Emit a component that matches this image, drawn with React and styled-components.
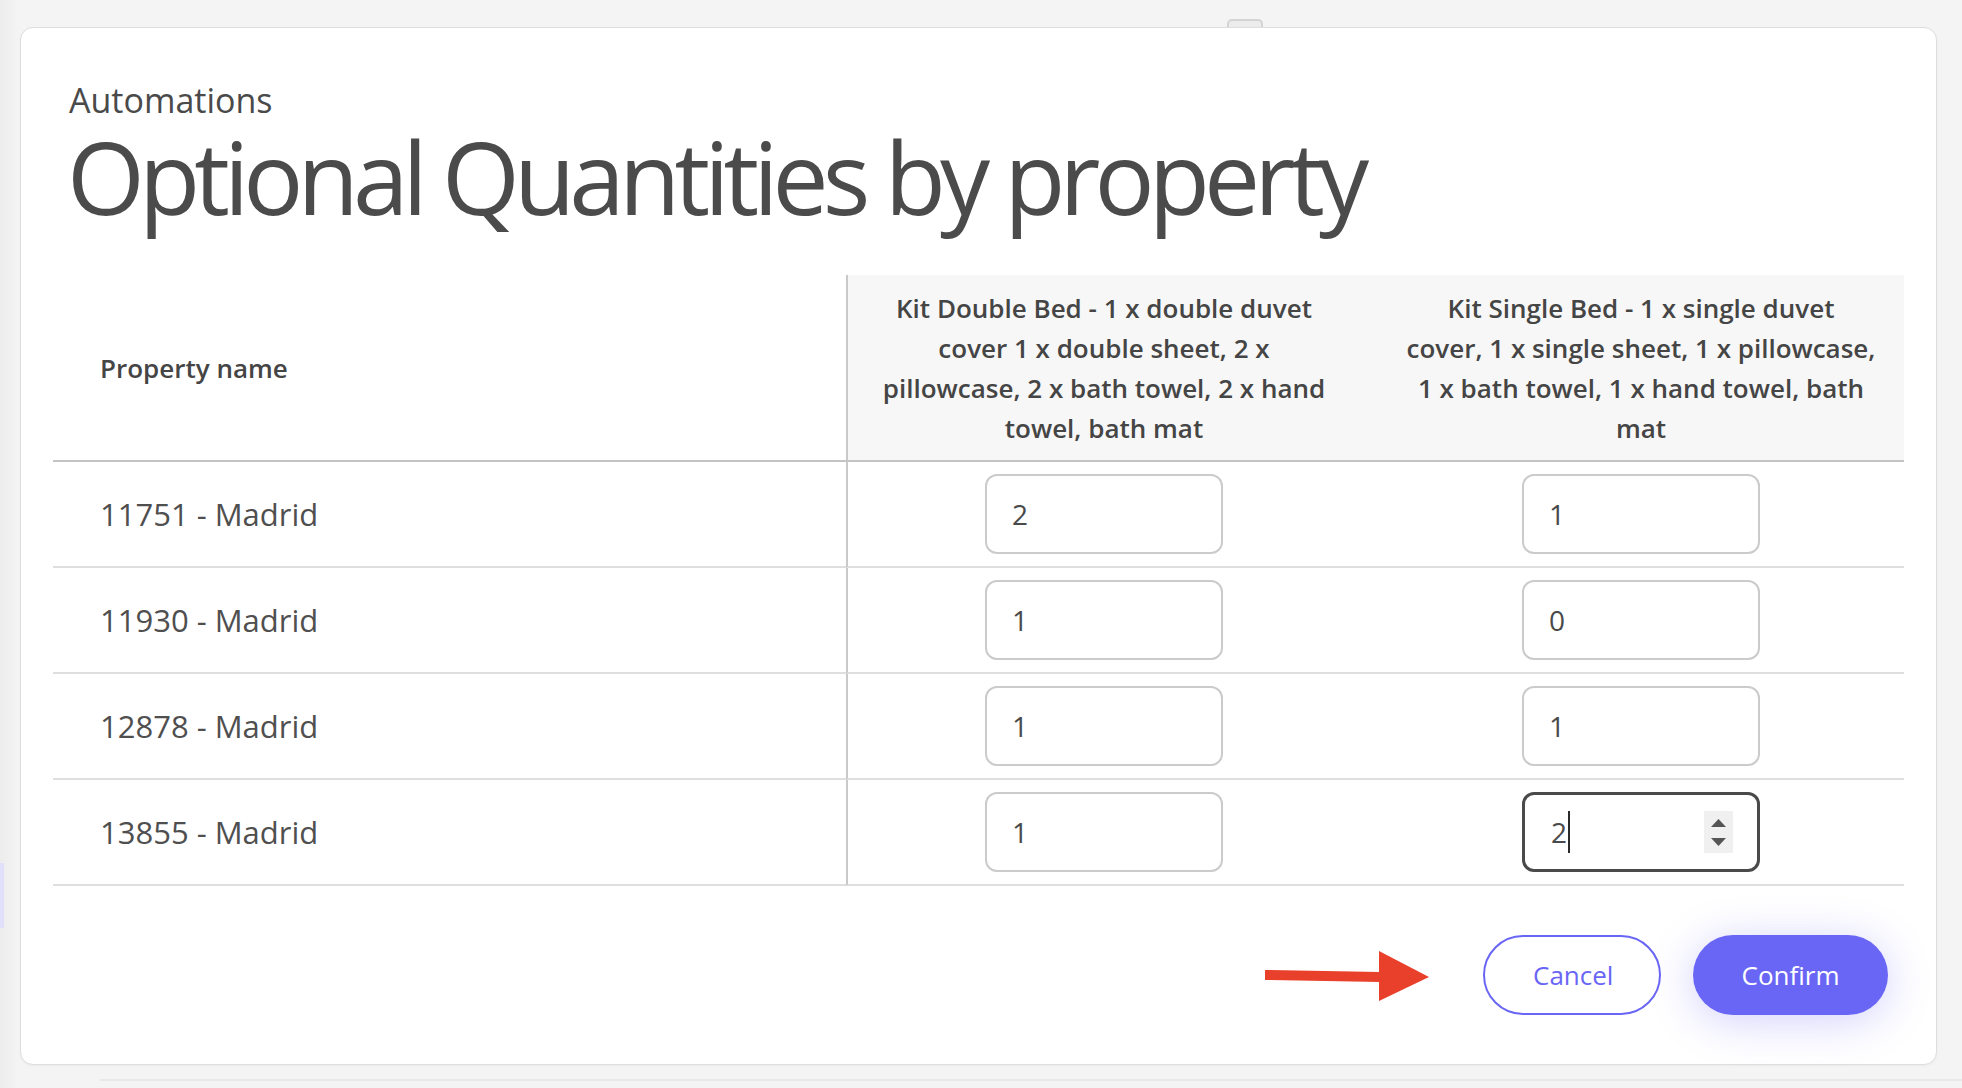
import styled, { createGlobalStyle } from "styled-components";

const GlobalStyle = createGlobalStyle`
    body{
        margin: 0;
        font-family: "Open Sans", "Noto Sans", sans-serif;
        color: #4a4a4a;
        background:
            linear-gradient(#e8e8e8, #e8e8e8) 100px 1079px / 1862px 2px no-repeat,
            linear-gradient(#e2dffb, #e2dffb) 0 863px / 4px 65px no-repeat,
            linear-gradient(90deg, #ececec, #f4f4f4 18px) 0 0 / 20px 100% no-repeat,
            #f4f4f4;
    }
`;

const rows = [
    { name: "11751 - Madrid", double: "2", single: "1" },
    { name: "11930 - Madrid", double: "1", single: "0" },
    { name: "12878 - Madrid", double: "1", single: "1" },
    { name: "13855 - Madrid", double: "1", single: "2", active: true },
];

const QuantityField = ({ value, active }) => {
    if (!active) {
        return (
            <Field>
                <FieldInput type="text" defaultValue={value} readOnly />
            </Field>
        );
    }
    return (
        <Field $active>
            <FieldValue>
                {value}
                <Caret />
            </FieldValue>
            <Spinner>
                <svg width="15" height="8" viewBox="0 0 15 8"><path d="M7.5 0L15 8H0z" fill="#555" /></svg>
                <svg width="15" height="8" viewBox="0 0 15 8"><path d="M0 0h15L7.5 8z" fill="#555" /></svg>
            </Spinner>
        </Field>
    );
};

const App = () => {
    return (
        <Page>
            <GlobalStyle />
            <TopStrip>
                <Tab />
            </TopStrip>
            <Card>
                <Heading>
                    <Eyebrow>Automations</Eyebrow>
                    <Title>Optional Quantities by property</Title>
                </Heading>

                <Table>
                    <HeadCell>Property name</HeadCell>
                    <HeadCell $kit $divider>
                        Kit Double Bed - 1 x double duvet<br />
                        cover 1 x double sheet, 2 x<br />
                        pillowcase, 2 x bath towel, 2 x hand<br />
                        towel, bath mat
                    </HeadCell>
                    <HeadCell $kit $shift>
                        Kit Single Bed - 1 x single duvet<br />
                        cover, 1 x single sheet, 1 x pillowcase,<br />
                        1 x bath towel, 1 x hand towel, bath<br />
                        mat
                    </HeadCell>

                    {rows.map((r) => (
                        <Row key={r.name}>
                            <NameCell>{r.name}</NameCell>
                            <InputCell $divider>
                                <QuantityField value={r.double} />
                            </InputCell>
                            <InputCell $shift>
                                <QuantityField value={r.single} active={r.active} />
                            </InputCell>
                        </Row>
                    ))}
                </Table>

                <Actions>
                    <Pointer width="164" height="50" viewBox="0 0 164 50">
                        <path d="M0 19L115 21V31L0 29z" fill="#e8402a" />
                        <path d="M114 0L164 26L114 50z" fill="#e8402a" />
                    </Pointer>
                    <GhostButton>Cancel</GhostButton>
                    <PrimaryButton>Confirm</PrimaryButton>
                </Actions>
            </Card>
        </Page>
    );
};

const Page = styled.div`
    width: 1962px;
    height: 1088px;
    box-sizing: border-box;
    padding: 0 25px 0 20px;
    overflow: hidden;
`;

const TopStrip = styled.div`
    height: 27px;
    display: flex;
    align-items: flex-end;
    padding-left: 1207px;
`;

const Tab = styled.div`
    width: 32px;
    height: 6px;
    border: 2px solid #d4d4d4;
    border-bottom: none;
    border-radius: 5px 5px 0 0;
    background: #ececec;
`;

const Card = styled.div`
    width: 1917px;
    box-sizing: border-box;
    background: #fff;
    border: 1.5px solid #dedede;
    border-radius: 13px;
    box-shadow: 0 1px 3px rgba(0, 0, 0, 0.04);
    padding: 52px 32px 49px;
`;

const Heading = styled.div`
    padding-left: 16px;
`;

const Eyebrow = styled.div`
    font-size: 34px;
    line-height: 40px;
    color: #4a4a4a;
`;

const Title = styled.h1`
    margin: 4px 0 0 -2px;
    font-size: 100px;
    line-height: 104px;
    font-weight: 500;
    letter-spacing: -5.9px;
    color: #4b4b4b;
`;

const Table = styled.div`
    margin-top: 47px;
    display: grid;
    grid-template-columns: 793px 514px 1fr;
`;

const Row = styled.div`
    display: contents;
`;

const HeadCell = styled.div`
    height: 185px;
    display: flex;
    align-items: center;
    justify-content: ${(p) => (p.$kit ? "center" : "flex-start")};
    text-align: ${(p) => (p.$kit ? "center" : "left")};
    padding-left: ${(p) => (p.$kit ? (p.$shift ? "18px" : "0") : "47px")};
    background: ${(p) => (p.$kit ? "#f7f7f7" : "#fff")};
    border-bottom: 2px solid #c4c4c4;
    border-left: ${(p) => (p.$divider ? "2px solid #c9c9c9" : "none")};
    font-size: 26px;
    line-height: 40px;
    font-weight: 560;
    color: #454545;
`;

const NameCell = styled.div`
    height: 104px;
    display: flex;
    align-items: center;
    padding-left: 47px;
    border-bottom: 2px solid #dfdfdf;
    font-size: 31px;
    font-weight: 370;
    color: #4f4f4f;
`;

const InputCell = styled.div`
    height: 104px;
    display: flex;
    align-items: center;
    justify-content: center;
    padding-left: ${(p) => (p.$shift ? "18px" : "0")};
    border-bottom: 2px solid #dfdfdf;
    border-left: ${(p) => (p.$divider ? "2px solid #c9c9c9" : "none")};
`;

const Field = styled.div`
    width: 238px;
    height: 80px;
    box-sizing: border-box;
    display: flex;
    align-items: center;
    border: ${(p) => (p.$active ? "3px solid #4a4a4a" : "2px solid #cbcbcb")};
    border-radius: 12px;
    padding: 0 24px 0 ${(p) => (p.$active ? "26px" : "25px")};
    background: #fff;
`;

const FieldInput = styled.input`
    width: 100%;
    border: none;
    outline: none;
    padding: 0;
    font-family: inherit;
    font-size: 28px;
    font-weight: 370;
    color: #4a4a4a;
    background: transparent;
`;

const FieldValue = styled.div`
    flex: 1;
    display: flex;
    align-items: center;
    font-size: 28px;
    font-weight: 370;
    color: #4a4a4a;
`;

const Caret = styled.span`
    width: 2px;
    height: 42px;
    background: #2a2a2a;
    margin-left: 1px;
`;

const Spinner = styled.div`
    width: 29px;
    height: 42px;
    display: flex;
    flex-direction: column;
    align-items: center;
    justify-content: center;
    gap: 11px;
    background: #f0f0f0;
`;

const Actions = styled.div`
    margin-top: 49px;
    padding-right: 16px;
    display: flex;
    align-items: center;
    justify-content: flex-end;
`;

const Pointer = styled.svg`
    margin-right: 54px;
    margin-top: 2px;
`;

const buttonBase = `
    height: 80px;
    box-sizing: border-box;
    padding: 0 48px;
    border-radius: 40px;
    font-family: "Open Sans", "Noto Sans", sans-serif;
    font-size: 26px;
    cursor: pointer;
`;

const GhostButton = styled.button`
    ${buttonBase}
    width: 178px;
    background: #fff;
    color: #6a66f5;
    border: 2px solid #6a66f5;
`;

const PrimaryButton = styled.button`
    ${buttonBase}
    width: 195px;
    margin-left: 32px;
    background: #6a66f5;
    color: #fff;
    border: none;
    box-shadow: 0 6px 44px rgba(106, 102, 245, 0.3);
`;

export default App;
